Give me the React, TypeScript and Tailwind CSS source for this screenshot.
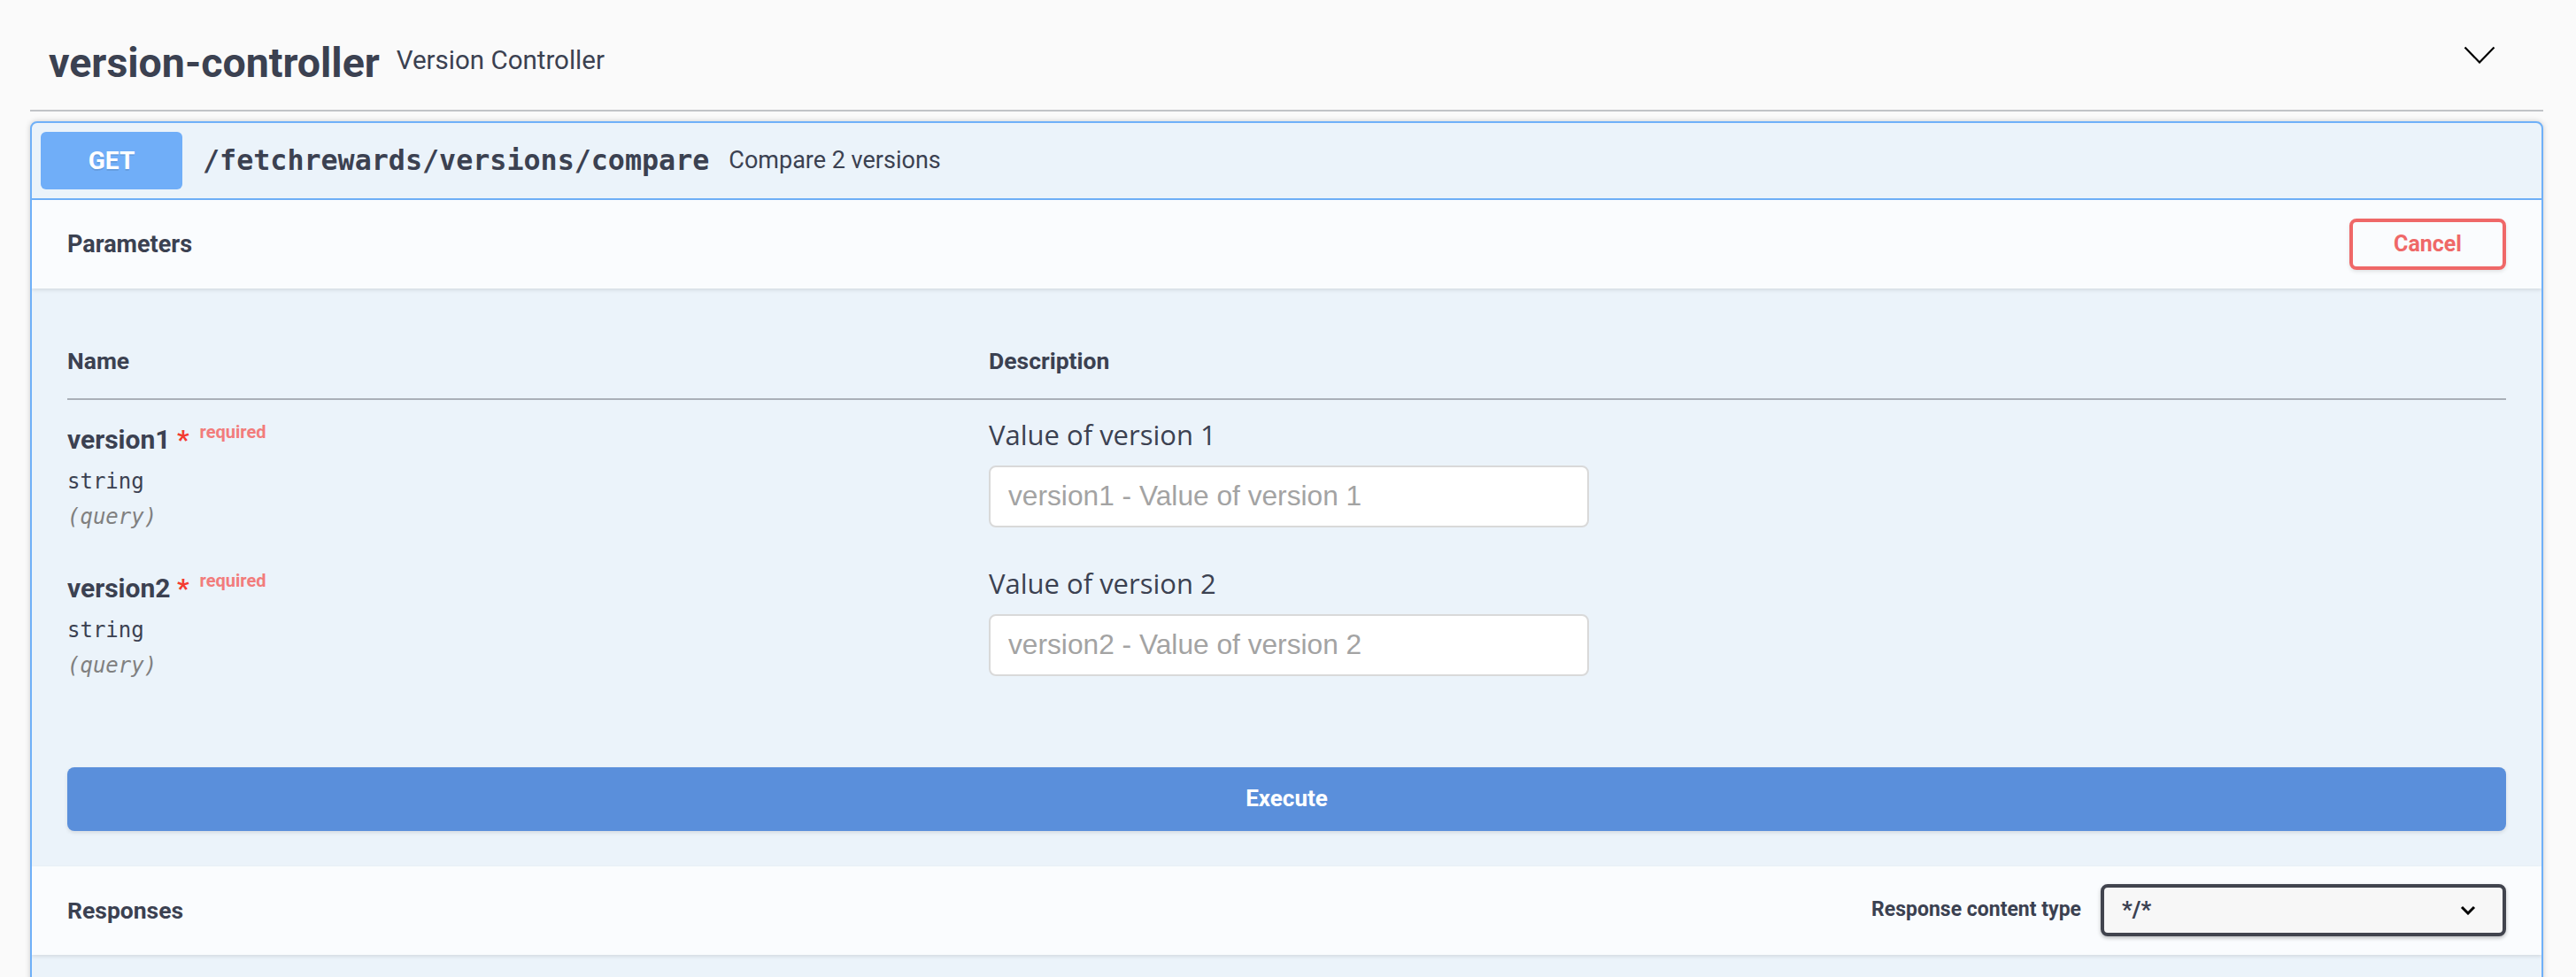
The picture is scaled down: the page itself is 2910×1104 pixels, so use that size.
const params = [
  { name: 'version1', description: 'Value of version 1' },
  { name: 'version2', description: 'Value of version 2' },
];

function Chevron({ className }: { className?: string }) {
  return (
    <svg className={className} width="36" height="20" viewBox="0 0 36 20" fill="none">
      <path d="M1.5 1.5 L18 18.5 L34.5 1.5" stroke="#000" strokeWidth="2.2" />
    </svg>
  );
}

export default function App() {
  return (
    <div className="h-[1104px] w-full overflow-hidden bg-[#fafafa] pl-[34px] pr-[37px] font-['Roboto',sans-serif] text-[#3b4151]">
      {/* tag header */}
      <div className="flex h-[126px] items-center justify-between border-b-2 border-[#c1c3c7] pl-[21px] pr-[54px] pt-[18px]">
        <div className="flex items-center">
          <span className="text-[46.5px] font-bold leading-none">version-controller</span>
          <span className="mb-[4px] ml-[19px] text-[29.5px] leading-none">Version Controller</span>
        </div>
        <Chevron className="mb-[18px]" />
      </div>

      {/* operation block */}
      <div className="mt-[11px] overflow-hidden rounded-[8px] border-2 border-[#6fb0f8] bg-[#ebf3fa] shadow-[0_0_6px_rgba(0,0,0,0.19)]">
        <div className="flex h-[87px] items-center border-b-2 border-[#6fb0f8] pl-[10px]">
          <div className="flex h-[65px] w-[160px] items-center justify-center rounded-[6px] bg-[#70aef8] text-[28px] font-bold text-white [text-shadow:0_2px_0_rgba(0,0,0,0.1)]">
            GET
          </div>
          <span className="ml-[23px] font-['DejaVu_Sans_Mono',monospace] text-[31.7px] font-semibold">
            /fetchrewards/versions/compare
          </span>
          <span className="ml-[22px] text-[27px]">Compare 2 versions</span>
        </div>

        <div className="relative z-10 flex h-[100px] items-center justify-between bg-[#fafcfe] px-[40px] shadow-[0_2px_4px_rgba(0,0,0,0.1)]">
          <h4 className="text-[27px] font-bold">Parameters</h4>
          <button className="h-[58px] w-[177px] rounded-[8px] border-4 border-[#ef6868] text-[25px] font-bold text-[#ef6868] shadow-[0_2px_4px_rgba(0,0,0,0.1)]">
            Cancel
          </button>
        </div>

        <div className="px-[40px] pb-[40px] pt-[69px]">
          <div className="grid grid-cols-[1041px_1fr] border-b-2 border-[#aab0b8] pb-[28px] text-[26.5px] font-bold leading-none">
            <div>Name</div>
            <div>Description</div>
          </div>

          {params.map((p) => (
            <div key={p.name} className="grid h-[168px] grid-cols-[1041px_1fr]">
              <div className="pt-[30px]">
                <div className="flex items-start leading-none">
                  <span className="text-[30px] font-bold">{p.name}</span>
                  <span className="text-[30px] font-bold text-[#f43b30]">{'\u00a0*'}</span>
                  <span className="-mt-[4px] ml-[12px] text-[20px] font-bold text-[#f27c7c]">required</span>
                </div>
                <div className="mt-[20px] font-['DejaVu_Sans_Mono',monospace] text-[24px] leading-none">string</div>
                <div className="mt-[16px] font-['DejaVu_Sans_Mono',monospace] text-[24px] italic leading-none text-[#808080]">
                  (query)
                </div>
              </div>
              <div className="pt-[19px]">
                <p className="font-['Open_Sans',sans-serif] text-[31px] leading-[40px]">{p.description}</p>
                <input
                  type="text"
                  placeholder={`${p.name} - ${p.description}`}
                  className="mt-[15px] h-[70px] w-[678px] rounded-[8px] border-2 border-[#d9d9d9] bg-white px-[20px] font-['Liberation_Sans',sans-serif] text-[31.7px] outline-none placeholder:text-[#a3a3a3]"
                />
              </div>
            </div>
          ))}

          <button className="mt-[79px] h-[72px] w-full rounded-[8px] bg-[#5a8fdb] text-[26px] font-bold text-white shadow-[0_2px_4px_rgba(0,0,0,0.1)]">
            Execute
          </button>
        </div>

        <div className="relative z-10 flex h-[100px] items-center justify-between bg-[#fafcfe] px-[40px] shadow-[0_2px_4px_rgba(0,0,0,0.1)]">
          <h4 className="text-[26.5px] font-bold">Responses</h4>
          <div className="flex items-center">
            <span className="mr-[22px] text-[23px] font-bold">Response content type</span>
            <div className="flex h-[59px] w-[458px] items-center justify-between rounded-[8px] border-4 border-[#41444e] bg-[#f7f7f7] pl-[20px] pr-[30px] shadow-[0_2px_4px_rgba(0,0,0,0.25)]">
              <span className="text-[26px] font-bold">*/*</span>
              <svg width="18" height="11" viewBox="0 0 18 11" fill="none">
                <path d="M2 2 L9 9 L16 2" stroke="#000" strokeWidth="3" />
              </svg>
            </div>
          </div>
        </div>

        <div className="h-[200px]" />
      </div>
    </div>
  );
}
